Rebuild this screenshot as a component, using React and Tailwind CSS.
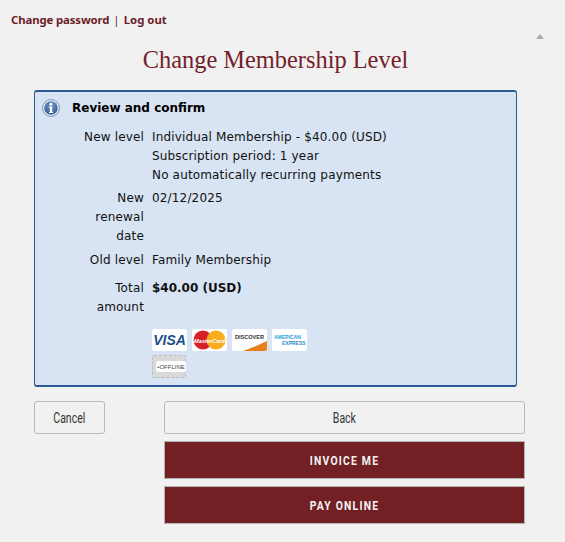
import React from "react"

const bodyFont = "font-['DejaVu_Sans','Liberation_Sans',sans-serif]"
const linkFont = "font-['Noto_Sans','Open_Sans',sans-serif]"
const btnFont = "font-['Roboto','Liberation_Sans',sans-serif]"

function InfoIcon() {
  return (
    <svg width="18" height="18" viewBox="0 0 18 18">
      <defs>
        <radialGradient id="info" cx="50%" cy="35%" r="65%">
          <stop offset="0%" stopColor="#7b9cc8" />
          <stop offset="100%" stopColor="#2f5b97" />
        </radialGradient>
      </defs>
      <circle cx="9" cy="9" r="8.4" fill="#f4f7fb" stroke="#6f8db5" strokeWidth="1" />
      <circle cx="9" cy="9" r="6.8" fill="url(#info)" />
      <circle cx="9" cy="5.2" r="1.4" fill="#fff" />
      <path d="M7 7.6h3.1v5.2h1v1.2H7v-1.2h1V8.8H7z" fill="#fff" />
    </svg>
  )
}

function CardBox({ children }) {
  return <div className="w-[35px] h-[22px] bg-white rounded-[2px] overflow-hidden flex items-center justify-center relative">{children}</div>
}

function Visa() {
  return (
    <CardBox>
      <span className="font-['Liberation_Sans',sans-serif] font-bold italic text-[14px] leading-none tracking-normal text-[#1b4f8a]">VISA</span>
    </CardBox>
  )
}

function MasterCard() {
  return (
    <CardBox>
      <svg width="35" height="22" viewBox="0 0 35 22">
        <circle cx="11" cy="11" r="9.5" fill="#d81f2a" />
        <circle cx="24" cy="11" r="9.5" fill="#f8ad1d" />
        <text x="17.5" y="13.5" textAnchor="middle" fontSize="5.6" fontWeight="700" fontStyle="italic" fontFamily="Liberation Sans" letterSpacing="0" fill="#fff">MasterCard</text>
      </svg>
    </CardBox>
  )
}

function Discover() {
  return (
    <CardBox>
      <svg width="35" height="22" viewBox="0 0 35 22">
        <path d="M11 22 C20 19 29 15 35 12 V22 Z" fill="#e8801f" />
        <text x="17.5" y="9.5" textAnchor="middle" fontSize="5.6" fontWeight="700" fontFamily="Liberation Sans" letterSpacing="0" fill="#333">DISCOVER</text>
      </svg>
    </CardBox>
  )
}

function Amex() {
  return (
    <CardBox>
      <svg width="35" height="22" viewBox="0 0 35 22">
        <text x="2" y="9.5" fontSize="5" fontWeight="700" fontFamily="Liberation Sans" letterSpacing="0" fill="#2aa3dc">AMERICAN</text>
        <text x="10" y="16" fontSize="5" fontWeight="700" fontFamily="Liberation Sans" letterSpacing="0" fill="#2a8fc4">EXPRESS</text>
      </svg>
    </CardBox>
  )
}

function Offline() {
  return (
    <div className="w-[34px] h-[23px] bg-[#d9d9d9] border border-dashed border-[#bdbdbd] rounded-[2px] relative">
      <div className="absolute left-[3px] top-[5px] w-[30px] h-[11px] bg-white rounded-[2px] flex items-center justify-center">
        <span className="font-['Liberation_Sans',sans-serif] text-[6px] leading-none tracking-normal text-[#444]">•OFFLINE</span>
      </div>
    </div>
  )
}

function Row({ label, className = "", children }) {
  return (
    <div className={`flex ${className}`}>
      <div className="w-[106px] text-right shrink-0">{label}</div>
      <div className="ml-[8px]">{children}</div>
    </div>
  )
}

export default function App() {
  return (
    <div className="relative w-[565px] h-[542px] bg-[#f1f1f1] overflow-hidden px-[34px]">
      <div className={`${linkFont} -ml-[23px] pt-[12px] text-[11.4px] leading-[16px] font-bold text-[#6b1d2a]`}>
        <span className="tracking-[-0.13px]">Change password</span>
        <span className="mx-[4px] font-normal">|</span>
        <span>Log out</span>
      </div>

      <h1 className="font-['Liberation_Serif',serif] text-[24.4px] leading-[30px] text-[#74202a] mt-[17px] w-[483px] text-center">
        Change Membership Level
      </h1>

      <svg className="absolute left-[536px] top-[34px]" width="8" height="5" viewBox="0 0 8 5">
        <path d="M4 0L8 5H0z" fill="#a9a9a9" />
      </svg>

      <div className={`${bodyFont} mt-[15px] w-[483px] h-[297px] bg-[#d8e4f3] border border-t-2 border-b-2 border-[#2c5a94] rounded-[3px] text-[12px] tracking-[0.16px] leading-[19px] text-[#111] pl-[3px]`}>
        <div className="flex items-center pt-[6px] pl-[4px] h-[25px]">
          <InfoIcon />
          <div className="ml-[12px] pt-[2px] font-bold tracking-normal text-[#000]">Review and confirm</div>
        </div>
        <div className="mt-[11px]">
          <Row label="New level">
            <div>Individual Membership - $40.00 (USD)</div>
            <div>Subscription period: 1 year</div>
            <div>No automatically recurring payments</div>
          </Row>
          <Row label={<>New<br />renewal<br />date</>} className="mt-[4px]">
            02/12/2025
          </Row>
          <Row label="Old level" className="mt-[5px]">
            Family Membership
          </Row>
          <Row label={<>Total<br />amount</>} className="mt-[9px]">
            <span className="font-bold tracking-normal">$40.00 (USD)</span>
          </Row>
          <div className="ml-[114px] mt-[12px] w-[170px] flex flex-wrap gap-x-[5px] gap-y-[4px]">
            <Visa />
            <MasterCard />
            <Discover />
            <Amex />
            <Offline />
          </div>
        </div>
      </div>

      <div className={`${btnFont} mt-[14px] flex gap-[59px]`}>
        <div className="w-[71px] h-[33px] pt-[1px] border border-[#b9b9b9] rounded-[3px] flex items-center justify-center text-[14px] text-[#333]">
          <span className="inline-block scale-x-[0.75]">Cancel</span>
        </div>
        <div className="w-[361px] flex flex-col">
          <div className="h-[33px] pt-[1px] border border-[#b9b9b9] rounded-[3px] flex items-center justify-center text-[14px] text-[#333]">
            <span className="inline-block scale-x-[0.75]">Back</span>
          </div>
          <div className="mt-[7px] h-[38px] pt-[2px] bg-[#722024] border border-[#b4b4b4] flex items-center justify-center text-[13px] font-bold tracking-[1.5px] text-[#f3f3f3]">
            <span className="inline-block scale-x-[0.8]">INVOICE ME</span>
          </div>
          <div className="mt-[7px] h-[38px] pt-[2px] bg-[#722024] border border-[#b4b4b4] flex items-center justify-center text-[13px] font-bold tracking-[1.5px] text-[#f3f3f3]">
            <span className="inline-block scale-x-[0.8]">PAY ONLINE</span>
          </div>
        </div>
      </div>
    </div>
  )
}
